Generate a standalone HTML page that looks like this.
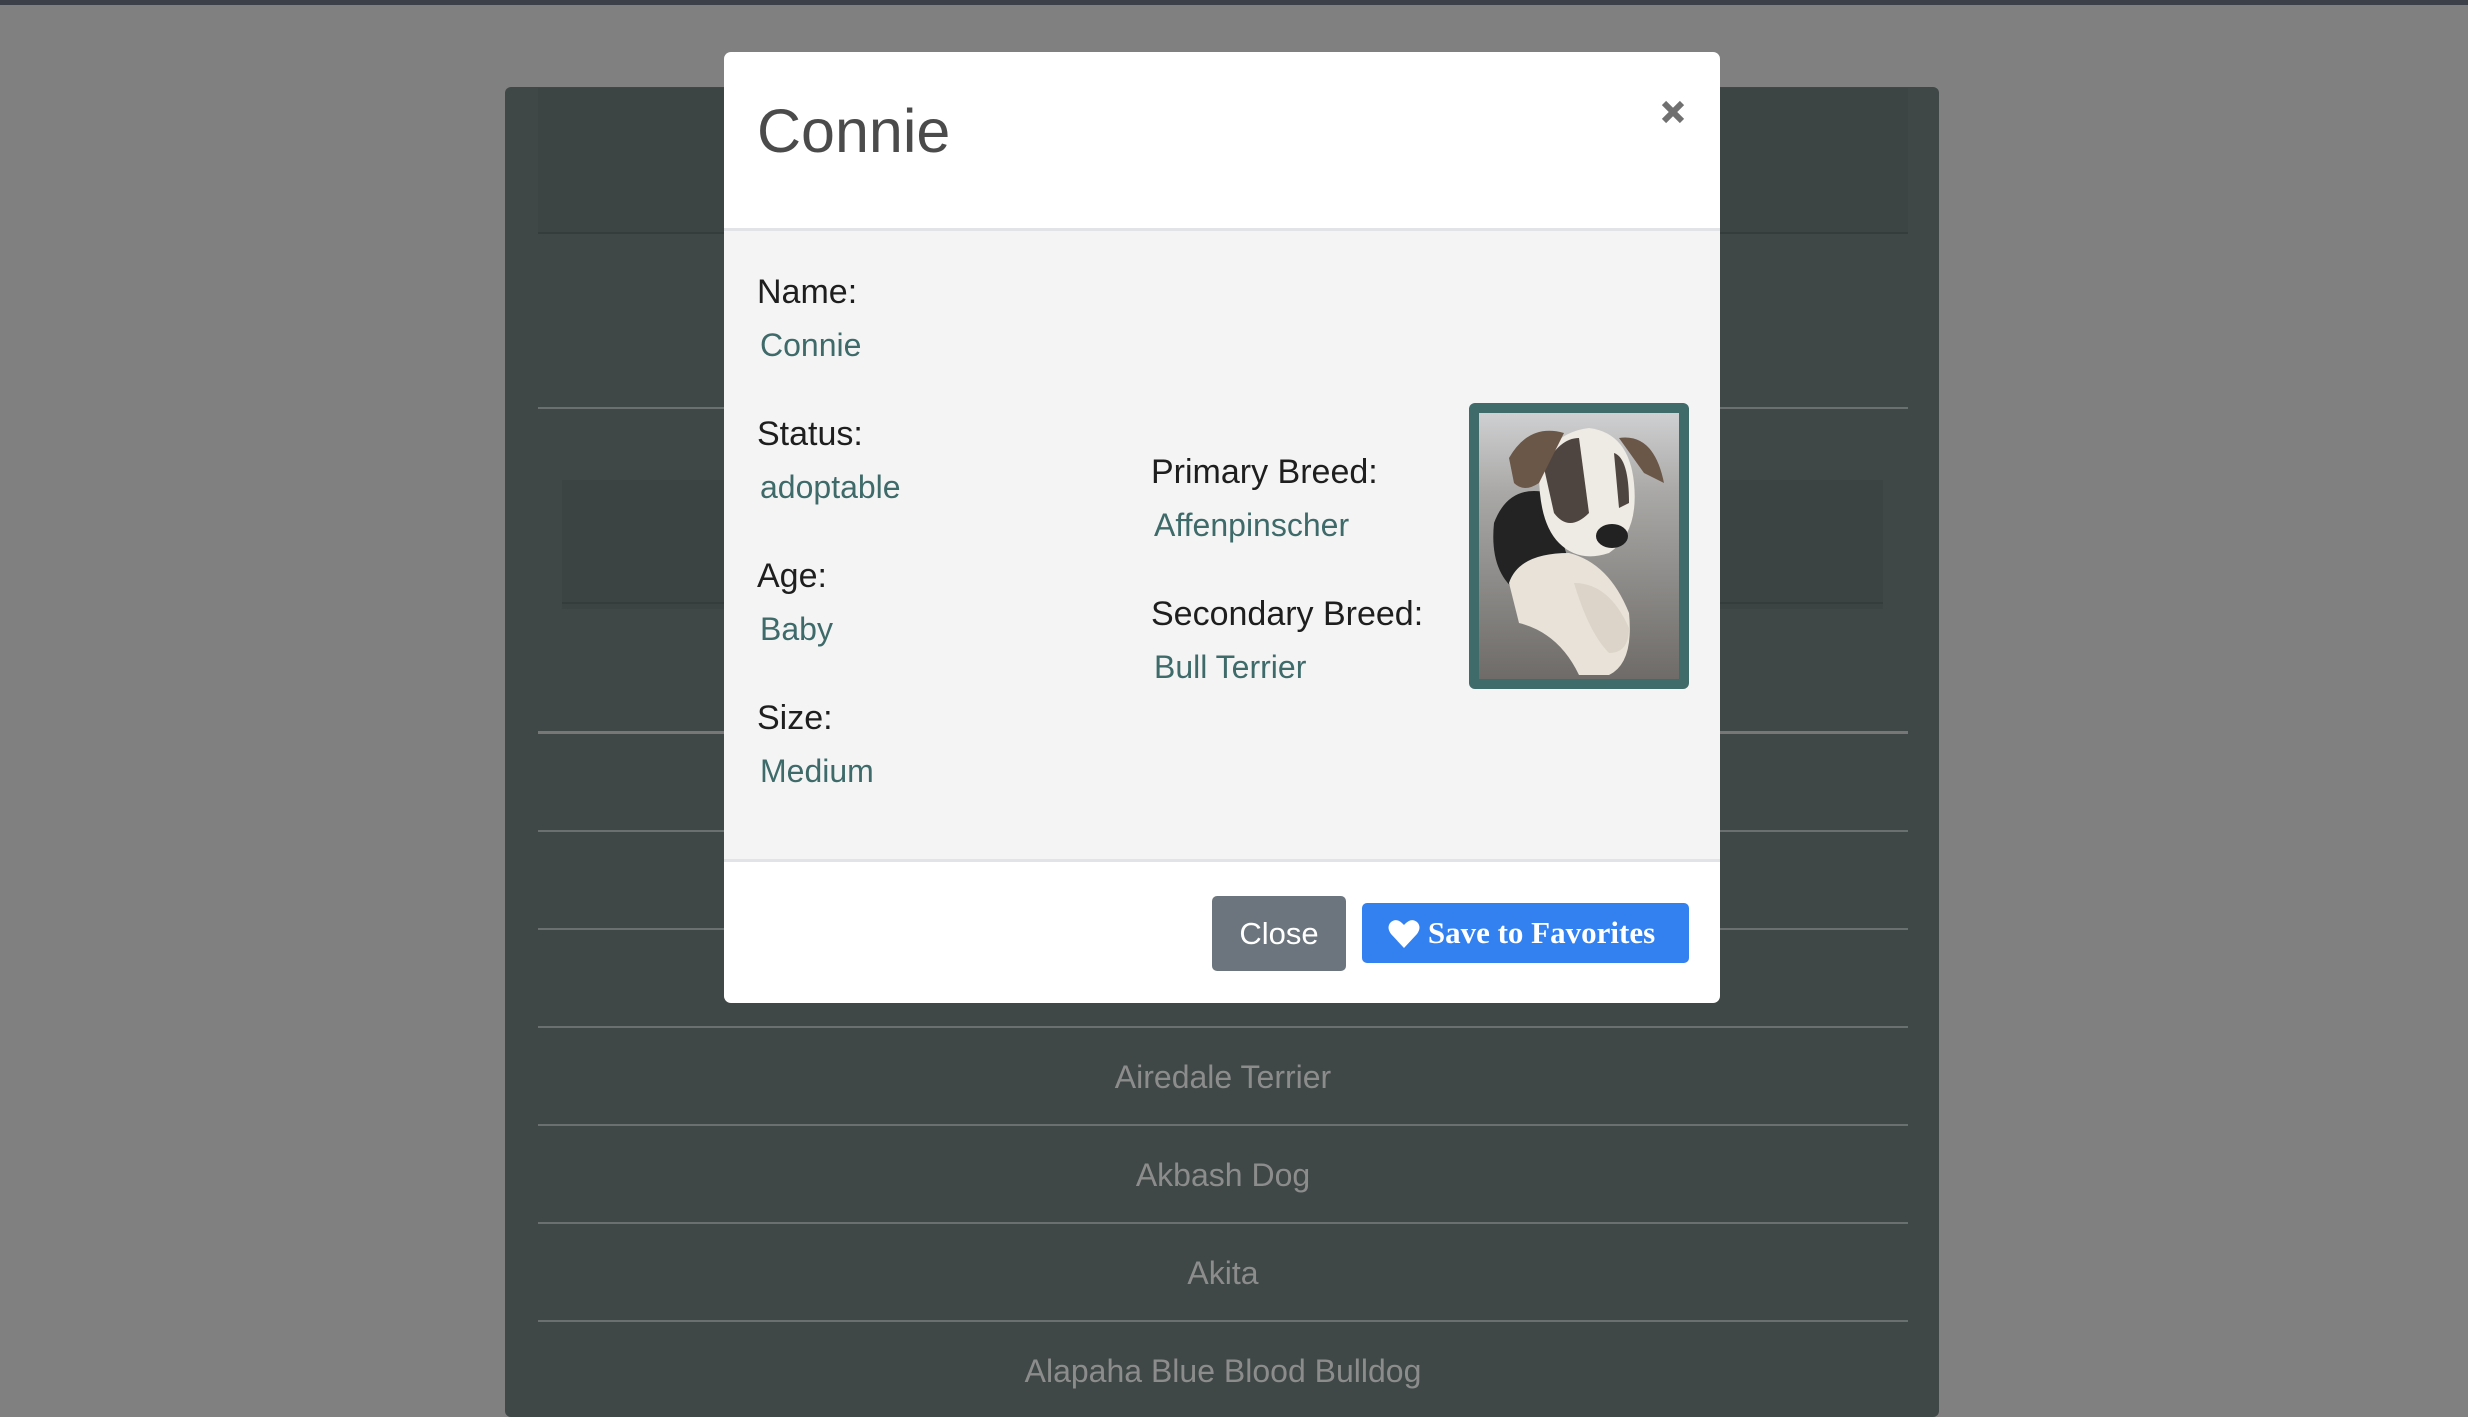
<!DOCTYPE html>
<html><head><meta charset="utf-8"><style>
*{margin:0;padding:0;box-sizing:border-box}
body{width:2468px;height:1406px;background:#808080;position:relative;overflow:hidden;font-family:"Liberation Sans",sans-serif}
.abs{position:absolute}
.topbar{left:0;top:0;width:2468px;height:5px;background:#3c4048}
.panel{left:505px;top:87px;width:1434px;height:1330px;background:#3f4747;border-radius:6px}
.hdr{left:538px;top:88px;width:1370px;height:145px;background:#3c4444}
.blk{left:562px;top:480px;width:1321px;height:129px;background:#3b4343}
.ln{left:538px;width:1370px;height:2px;background:#6a6f6f}
.item{left:538px;width:1370px;text-align:center;color:#8c8c8c;font-size:32px}
.modal{left:724px;top:52px;width:996px;height:951px;background:#fff;border-radius:7px;overflow:hidden}
.mbody{left:0;top:176px;width:996px;height:634px;background:#f4f4f4;border-top:3px solid #e2e3e6;border-bottom:3px solid #e2e3e6}
.title{left:33px;top:44px;font-size:61px;color:#4b4b4b}
.lab{font-size:34px;color:#1e1e1e}
.val{font-size:32px;color:#3e6a6a}
.btn{color:#fff;border-radius:5px;text-align:center}
</style></head><body>
<div class="abs topbar"></div>
<div class="abs panel"></div>
<div class="abs hdr"></div>
<div class="abs blk"></div>
<div class="abs ln" style="top:232px;background:#353c3c"></div>
<div class="abs ln" style="top:407px"></div>
<div class="abs ln" style="top:602px;left:562px;width:1321px;background:#353c3c"></div>
<div class="abs ln" style="top:731px;height:3px;background:#777"></div>
<div class="abs ln" style="top:830px"></div>
<div class="abs ln" style="top:928px"></div>
<div class="abs ln" style="top:1026px"></div>
<div class="abs ln" style="top:1124px"></div>
<div class="abs ln" style="top:1222px"></div>
<div class="abs ln" style="top:1320px"></div>
<div class="abs item" style="top:1059px">Airedale Terrier</div>
<div class="abs item" style="top:1157px">Akbash Dog</div>
<div class="abs item" style="top:1255px">Akita</div>
<div class="abs item" style="top:1353px">Alapaha Blue Blood Bulldog</div>

<div class="abs modal">
  <div class="abs title">Connie</div>
  <svg class="abs" style="left:937px;top:48px" width="24" height="24" viewBox="0 0 24 24"><path d="M3 3L21 21M21 3L3 21" stroke="#707070" stroke-width="6"/></svg>
  <div class="abs mbody">
    <div class="abs lab" style="left:33px;top:42px">Name:</div>
    <div class="abs val" style="left:36px;top:96px">Connie</div>
    <div class="abs lab" style="left:33px;top:184px">Status:</div>
    <div class="abs val" style="left:36px;top:238px">adoptable</div>
    <div class="abs lab" style="left:33px;top:326px">Age:</div>
    <div class="abs val" style="left:36px;top:380px">Baby</div>
    <div class="abs lab" style="left:33px;top:468px">Size:</div>
    <div class="abs val" style="left:36px;top:522px">Medium</div>
    <div class="abs lab" style="left:427px;top:222px">Primary Breed:</div>
    <div class="abs val" style="left:430px;top:276px">Affenpinscher</div>
    <div class="abs lab" style="left:427px;top:364px">Secondary Breed:</div>
    <div class="abs val" style="left:430px;top:418px">Bull Terrier</div>
    <div class="abs" style="left:745px;top:172px;width:220px;height:286px;background:#3f6b6a;border-radius:6px;padding:10px">
      <svg width="200" height="266" viewBox="0 0 200 266">
        <defs><linearGradient id="bg" x1="0" y1="0" x2="0" y2="1"><stop offset="0" stop-color="#cfd0d2"/><stop offset=".3" stop-color="#a9a8a6"/><stop offset="1" stop-color="#6e6b68"/></linearGradient></defs>
        <rect width="200" height="266" fill="url(#bg)"/>
        <path d="M15 110 Q30 70 70 80 L90 150 L40 180 Q10 160 15 110Z" fill="#232323"/>
        <path d="M60 60 Q70 20 110 15 Q150 20 155 70 Q160 120 130 140 Q100 150 80 130 Q60 110 60 60Z" fill="#eeeae4"/>
        <path d="M65 55 Q80 25 100 25 L110 100 Q90 120 75 100 Z" fill="#4e4440"/>
        <path d="M135 40 Q150 45 150 90 L140 95 Z" fill="#4e4440"/>
        <path d="M30 45 Q50 10 85 20 L60 70 Q45 80 35 70Z" fill="#6b5748"/>
        <path d="M140 25 Q175 20 185 70 L165 60 Z" fill="#6b5748"/>
        <ellipse cx="133" cy="123" rx="16" ry="12" fill="#222"/>
        <path d="M30 170 Q40 140 90 140 Q130 150 150 200 Q155 250 130 262 L100 262 Q80 220 40 210Z" fill="#e8e2d8"/>
        <path d="M95 170 Q130 170 150 215 Q150 240 130 240 Q110 220 95 170Z" fill="#dcd4c8"/>
      </svg>
    </div>
  </div>
  <div class="abs btn" style="left:488px;top:844px;width:134px;height:75px;background:#6c757d;font-size:31px;line-height:75px">Close</div>
  <div class="abs btn" style="left:638px;top:851px;width:327px;height:60px;background:#3380f0;font-family:'Liberation Serif',serif;font-weight:bold;font-size:31px;line-height:60px;padding-left:32px">
    <svg class="abs" style="left:26px;top:16px" width="32" height="30" viewBox="0 0 32 30"><path d="M16 29 L3 15 Q-2 8 3 3 Q9 -2 16 6 Q23 -2 29 3 Q34 8 29 15Z" fill="#fff"/></svg>
    Save to Favorites</div>
</div>
</body></html>
